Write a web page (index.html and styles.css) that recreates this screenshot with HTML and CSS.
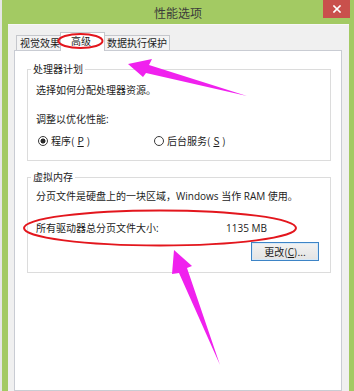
FILE: index.html
```html
<!DOCTYPE html>
<html lang="zh-CN">
<head>
<meta charset="utf-8">
<title>性能选项</title>
<link rel="stylesheet" href="styles.css">
</head>
<body>
<div class="window">
  <div class="titlebar">
    <span class="title">性能选项</span>
    <span class="close" aria-label="关闭">
      <svg width="8" height="8" viewBox="0 0 8 8"><path d="M1 1L7 7M7 1L1 7" stroke="#fff" stroke-width="1.6" stroke-linecap="square"/></svg>
    </span>
  </div>
  <div class="client">
    <div class="tabs">
      <div class="tab">视觉效果</div>
      <div class="tab active">高级</div>
      <div class="tab">数据执行保护</div>
    </div>
    <div class="panel">
      <fieldset class="group g1">
        <legend>处理器计划</legend>
        <p class="l1">选择如何分配处理器资源。</p>
        <p class="l2">调整以优化性能:</p>
        <div class="radios">
          <label class="radio"><span class="dot checked"></span>程序(<u>P</u>)</label>
          <label class="radio"><span class="dot"></span>后台服务(<u>S</u>)</label>
        </div>
      </fieldset>
      <fieldset class="group g2">
        <legend>虚拟内存</legend>
        <p class="v1">分页文件是硬盘上的一块区域，Windows 当作 RAM 使用。</p>
        <div class="size"><span>所有驱动器总分页文件大小:</span><span>1135 MB</span></div>
        <div class="actions"><button class="btn" type="button">更改(<u>C</u>)...</button></div>
      </fieldset>
    </div>
  </div>
</div>
<svg class="annot" width="354" height="391" viewBox="0 0 354 391">
  <ellipse cx="80.5" cy="41" rx="22" ry="7" fill="none" stroke="#e3161d" stroke-width="2"/>
  <ellipse cx="160" cy="228" rx="136" ry="17.5" fill="none" stroke="#e3161d" stroke-width="2"/>
  <polygon points="128,64 152,59 149,65 247,96 146,73 143,77" fill="#f021ee"/>
  <polygon points="174,250 192,266 187,268 220,365 179,273 172,274" fill="#f021ee"/>
</svg>
</body>
</html>
```
FILE: styles.css
```css
html, body {
  margin: 0;
  height: 100%;
}

body {
  position: relative;
  overflow: hidden;
  background: #e6e6e6;
  font-family: "Open Sans", "Noto Sans CJK SC", sans-serif;
  font-size: 10px;
  color: #1c1c1c;
}

.window {
  margin-left: 2px;
  height: 391px;
  background: #a3ca63;
  display: flex;
  flex-direction: column;
}

.titlebar {
  height: 24px;
  flex: none;
  display: grid;
  grid-template-columns: 1fr auto 1fr;
  align-items: start;
}

.title {
  grid-column: 2;
  padding-top: 1px;
  font-family: "Noto Sans CJK SC", sans-serif;
  font-size: 12px;
  line-height: 24px;
  color: #3b3b3b;
}

.close {
  grid-column: 3;
  justify-self: end;
  margin-right: 4px;
  width: 27px;
  height: 18px;
  background: #c9504c;
  display: flex;
  align-items: center;
  justify-content: center;
}

.client {
  flex: 1;
  margin: 0 5px 0 6px;
  background: #f0f0f0;
  border-top: 1px solid #f7f7f7;
  padding: 7px 7px 0 6px;
  display: flex;
  flex-direction: column;
}

.tabs {
  display: flex;
  align-items: flex-end;
  padding-left: 2px;
}

.tab {
  box-sizing: border-box;
  height: 15px;
  padding: 0 2px 0 3px;
  border: 1px solid #c5c7cc;
  border-bottom: none;
  background: #f3f3f3;
  line-height: 14px;
  white-space: nowrap;
  font-family: "Noto Sans CJK SC", sans-serif;
}

.tab.active {
  position: relative;
  z-index: 1;
  height: 19px;
  margin: 0 -2px -1px -3px;
  padding: 1px 13px 0 10px;
  background: #fff;
}

.panel {
  flex: 1;
  background: #fff;
  border: 1px solid #c9ccd3;
  padding: 12px 10px 0 12px;
}

.group {
  margin: 0;
  border: 1px solid #dcdcdc;
  padding: 0 8px 12px;
}

.group legend {
  margin-left: -5px;
  padding: 0 2px;
  line-height: 12px;
  font-family: "Noto Sans CJK SC", sans-serif;
}

.group p {
  margin: 0;
  line-height: 14px;
  white-space: nowrap;
}

.l1 { margin-top: 8px !important; }
.l2 { margin-top: 15px !important; }

.radios {
  margin-top: 8px;
  padding-left: 2px;
  display: grid;
  grid-template-columns: 116px auto;
  line-height: 14px;
}

.radio {
  display: inline-flex;
  align-items: center;
  gap: 3px;
  white-space: nowrap;
  font-family: "Noto Sans CJK SC", sans-serif;
}

.dot {
  box-sizing: border-box;
  width: 10px;
  height: 10px;
  border: 1px solid #3a3a3a;
  border-radius: 50%;
  background: #fff;
}

.dot.checked {
  background: radial-gradient(circle, #2a2a2a 0 2.2px, #fff 2.8px);
}

.g2 {
  margin-top: 10px;
  padding-bottom: 11px;
}

.v1 { margin-top: 6px !important; }

.size {
  margin-top: 18px;
  display: grid;
  grid-template-columns: 190px auto;
  line-height: 14px;
  white-space: nowrap;
}

.actions {
  margin-top: 7px;
  padding-right: 3px;
  display: flex;
  justify-content: flex-end;
}

.btn {
  box-sizing: border-box;
  width: 68px;
  height: 19px;
  padding: 0;
  border: 1px solid #3d84c6;
  background: linear-gradient(#f2f2f2, #e3e3e3);
  box-shadow: inset 0 0 0 1px #d6e8f7;
  font-family: "Noto Sans CJK SC", sans-serif;
  font-size: 10px;
  line-height: 16px;
  color: #1c1c1c;
}

.annot {
  position: absolute;
  z-index: 2;
  top: 0;
  left: 0;
  pointer-events: none;
}
```
